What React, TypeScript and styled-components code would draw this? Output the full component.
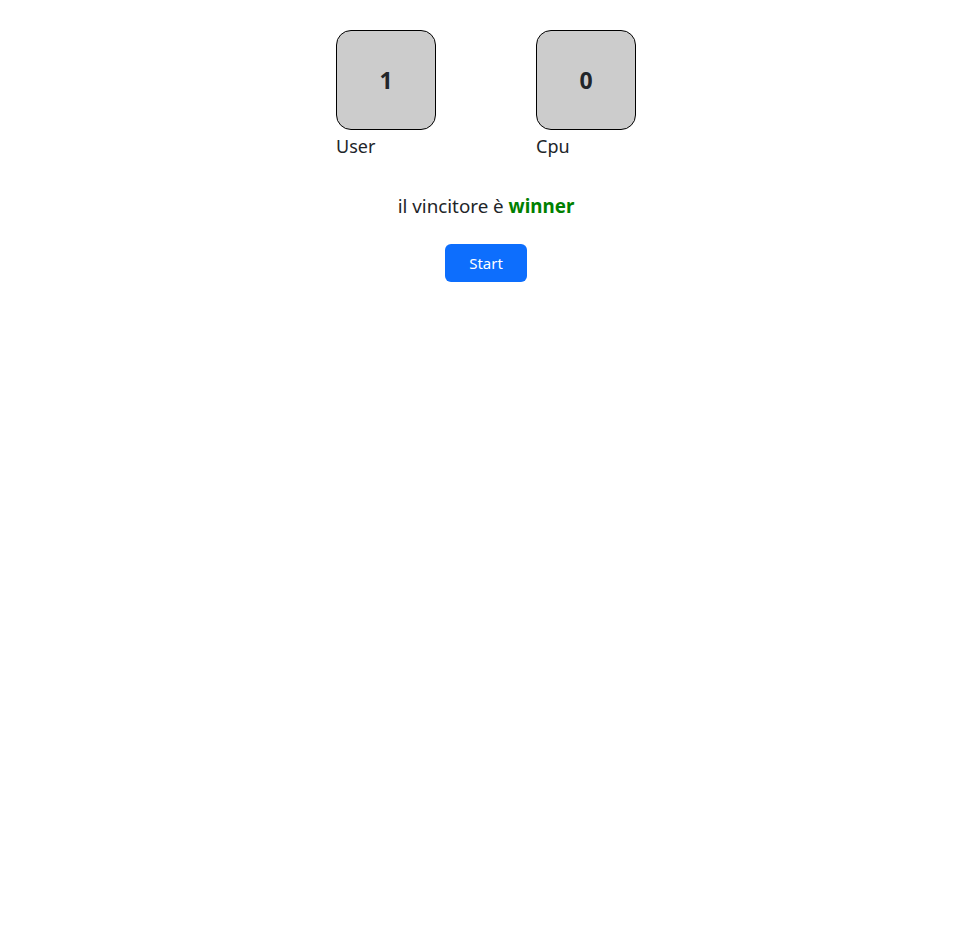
import React from "react";
import styled, { createGlobalStyle } from "styled-components";

const Global = createGlobalStyle`
  html, body { margin: 0; padding: 0; background: #fff; }
  body {
    font-family: "Noto Sans", "Open Sans", sans-serif;
    color: #212529;
    font-size: 16px;
  }
`;

const Page = styled.div`
  display: flex;
  flex-direction: column;
  align-items: center;
  padding-top: 30px;
`;

const Scores = styled.div`
  display: flex;
  gap: 100px;
`;

const Player = styled.div`
  display: flex;
  flex-direction: column;
  align-items: flex-start;
`;

const ScoreBox = styled.div`
  box-sizing: border-box;
  width: 100px;
  height: 100px;
  border: 1px solid #000;
  border-radius: 15px;
  background: #cccccc;
  display: flex;
  align-items: center;
  justify-content: center;
  font-size: 23px;
  font-weight: 700;
  color: #212529;
`;

const Label = styled.div`
  font-size: 18px;
  line-height: 26px;
  margin-top: 3px;
`;

const Result = styled.p`
  margin: 34px 0 0;
  font-size: 18.8px;
  line-height: 27px;
`;

const Winner = styled.b`
  color: #008000;
  font-weight: 700;
`;

const StartButton = styled.button`
  margin-top: 24px;
  box-sizing: border-box;
  width: 82px;
  height: 38px;
  border: none;
  border-radius: 6px;
  background: #0d6efd;
  color: #fff;
  font-family: inherit;
  font-size: 15px;
  cursor: pointer;
`;

export default function App() {
  return (
    <>
      <Global />
      <Page>
        <Scores>
          <Player>
            <ScoreBox>1</ScoreBox>
            <Label>User</Label>
          </Player>
          <Player>
            <ScoreBox>0</ScoreBox>
            <Label>Cpu</Label>
          </Player>
        </Scores>
        <Result>
          il vincitore è <Winner>winner</Winner>
        </Result>
        <StartButton>Start</StartButton>
      </Page>
    </>
  );
}
